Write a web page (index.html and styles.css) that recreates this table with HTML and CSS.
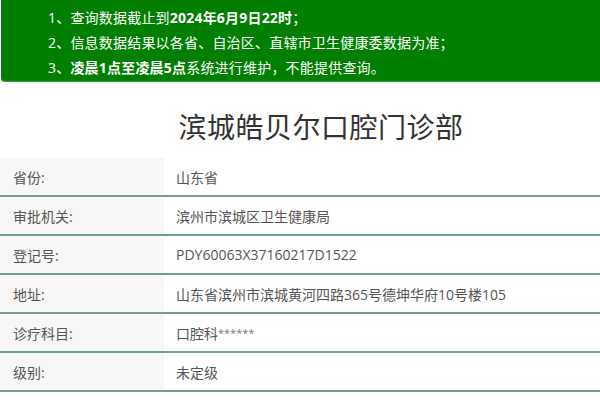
FILE: index.html
```html
<!DOCTYPE html>
<html lang="zh-CN">
<head>
<meta charset="utf-8">
<link rel="stylesheet" href="styles.css">
</head>
<body>
<div class="notice">
  <p>1、查询数据截止到<b>2024年6月9日22时</b>；</p>
  <p>2、信息数据结果以各省、自治区、直辖市卫生健康委数据为准；</p>
  <p>3、<b>凌晨1点至凌晨5点</b>系统进行维护，不能提供查询。</p>
</div>
<h1 class="title">滨城皓贝尔口腔门诊部</h1>
<div class="info">
  <div class="row"><div class="label">省份:</div><div class="value">山东省</div></div>
  <div class="row"><div class="label">审批机关:</div><div class="value">滨州市滨城区卫生健康局</div></div>
  <div class="row"><div class="label">登记号:</div><div class="value">PDY60063X37160217D1522</div></div>
  <div class="row"><div class="label">地址:</div><div class="value">山东省滨州市滨城黄河四路365号德坤华府10号楼105</div></div>
  <div class="row"><div class="label">诊疗科目:</div><div class="value">口腔科<span class="mask">******</span></div></div>
  <div class="row"><div class="label">级别:</div><div class="value">未定级</div></div>
</div>
</body>
</html>
```
FILE: styles.css
```css
html, body {
  margin: 0;
  padding: 0;
  background: #fff;
  font-family: "Open Sans", "Noto Sans CJK SC", sans-serif;
  overflow: hidden;
}
.notice {
  margin-left: 1px;
  height: 82px;
  box-sizing: border-box;
  background: #007f00;
  border-bottom-left-radius: 4px;
  border-bottom: 1px solid #3f9f3f;
  color: #fff;
  padding: 5px 0 0 47px;
  font-size: 14px;
  letter-spacing: 0.2px;
}
.notice p {
  margin: 0;
  line-height: 25px;
}
.notice b {
  font-weight: bold;
}
.title {
  margin: 0;
  padding-left: 42px;
  height: 76px;
  line-height: 90px;
  text-align: center;
  font-size: 28px;
  font-weight: normal;
  color: #333;
  letter-spacing: 0.5px;
}
.info {
  display: flex;
  flex-direction: column;
}
.row {
  display: flex;
  height: 39px;
  box-sizing: border-box;
  border-bottom: 2px solid #6f9e96;
  font-size: 14px;
  color: #555;
}
.label {
  width: 164px;
  box-sizing: border-box;
  padding-left: 13px;
  background: #f7f7f7;
  display: flex;
  align-items: center;
}
.value {
  flex: 1;
  padding-left: 12px;
  display: flex;
  align-items: center;
}
.mask {
  font-size: 11px;
  align-self: flex-start;
  margin-top: 11px;
  color: #777;
}
```
